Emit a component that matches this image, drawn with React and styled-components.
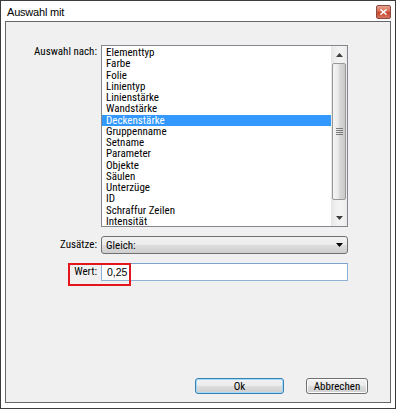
import React from "react";
import styled, { createGlobalStyle } from "styled-components";

const GlobalStyle = createGlobalStyle`
  html, body { margin: 0; padding: 0; background: #ffffff; }
  * { box-sizing: border-box; }
`;

const UI_FONT = `"Roboto Condensed", Roboto, "Liberation Sans", Arial, sans-serif`;

const Window = styled.div`
  width: 396px;
  height: 409px;
  border: 1px solid #3c3c3c;
  background: #ffffff;
  display: flex;
  flex-direction: column;
  padding: 0 4px 5px 4px;
  font-family: ${UI_FONT};
  font-stretch: 75%;
  font-size: 11px;
  color: #000;
`;

const TitleBar = styled.div`
  height: 20px;
  display: flex;
  align-items: center;
  justify-content: space-between;
`;

const Title = styled.span`
  margin-left: 2px;
  margin-top: 1px;
  font-family: "Liberation Sans", Arial, sans-serif;
  font-stretch: normal;
  font-size: 11px;
  letter-spacing: -0.2px;
  color: #000;
`;

const CloseButton = styled.div`
  width: 15px;
  height: 14px;
  margin-top: 2px;
  border: 1px solid #8a4a42;
  border-radius: 2px;
  background: linear-gradient(#e8a593, #d66a52 45%, #c7442c 55%, #d9775f);
  display: flex;
  align-items: center;
  justify-content: center;
`;

const Panel = styled.div`
  flex: 1;
  border: 1px solid #666666;
  background: #f0f0f0;
  display: flex;
  flex-direction: column;
  padding-top: 23px;
`;

const Form = styled.div`
  display: grid;
  grid-template-columns: 91px 247px;
  column-gap: 4px;
  row-gap: 9px;
`;

const Label = styled.div`
  position: relative;
  text-align: right;
  align-self: ${(p) => (p.$top ? "start" : "center")};
  padding-top: ${(p) => (p.$top ? "1px" : "0")};
  line-height: 11.25px;
  white-space: nowrap;
`;

const ListBox = styled.div`
  height: 182px;
  border: 1px solid #828790;
  background: #ffffff;
  display: flex;
  overflow: hidden;
`;

const Items = styled.div`
  flex: 1;
  padding-top: 1px;
  overflow: hidden;
`;

const Item = styled.div`
  height: 11.25px;
  line-height: 11.25px;
  padding-left: 4px;
  white-space: nowrap;
  background: ${(p) => (p.$selected ? "#3399ff" : "transparent")};
  color: ${(p) => (p.$selected ? "#ffffff" : "#000000")};
`;

const ScrollBar = styled.div`
  width: 16px;
  display: flex;
  flex-direction: column;
  background: linear-gradient(90deg, #e6e6e6, #f2f2f2 40%, #f2f2f2 70%, #ebebeb);
`;

const ArrowButton = styled.div`
  height: 17px;
  display: flex;
  align-items: center;
  justify-content: center;
`;

const Thumb = styled.div`
  height: 137px;
  margin: 0 1px;
  border: 1px solid #989898;
  border-radius: 2px;
  background: linear-gradient(90deg, #f4f4f4, #e9e9e9 45%, #d8d8d8 55%, #c9c9c9);
  display: flex;
  align-items: center;
  justify-content: center;
`;

const Track = styled.div`
  flex: 1;
`;

const Select = styled.div`
  height: 18px;
  border: 1px solid #707070;
  border-radius: 3px;
  background: linear-gradient(#f2f2f2, #ebebeb 50%, #dddddd 50%, #cfcfcf);
  display: flex;
  align-items: center;
  justify-content: space-between;
  padding: 0 4px 0 4px;
  line-height: 11px;
`;

const Input = styled.div`
  height: 18px;
  border: 1px solid #8fb2d8;
  border-top-color: #7da2ce;
  background: #ffffff;
  display: flex;
  align-items: center;
  padding-left: 5px;
  font-family: "Liberation Sans", Arial, sans-serif;
  font-stretch: normal;
  font-size: 10.5px;
`;

const Highlight = styled.div`
  position: absolute;
  left: 62px;
  top: -3px;
  width: 63px;
  height: 23px;
  border: 2px solid #e3161e;
  pointer-events: none;
`;

const ButtonRow = styled.div`
  margin-top: auto;
  display: flex;
  justify-content: flex-end;
  gap: 22px;
  padding: 0 22px 8px 0;
`;

const Button = styled.div`
  width: ${(p) => p.$w}px;
  height: 16px;
  border: 1px solid ${(p) => (p.$default ? "#3c7fb1" : "#707070")};
  border-radius: 3px;
  background: linear-gradient(#f2f2f2, #ebebeb 50%, #dddddd 50%, #cfcfcf);
  box-shadow: ${(p) => (p.$default ? "inset 0 0 0 1px #9fdcfb" : "inset 0 0 0 1px #fcfcfc")};
  display: flex;
  align-items: center;
  justify-content: center;
  line-height: 11px;
`;

const items = [
  "Elementtyp",
  "Farbe",
  "Folie",
  "Linientyp",
  "Linienstärke",
  "Wandstärke",
  "Deckenstärke",
  "Gruppenname",
  "Setname",
  "Parameter",
  "Objekte",
  "Säulen",
  "Unterzüge",
  "ID",
  "Schraffur Zeilen",
  "Intensität",
];

const Tri = ({ up, color = "#3e3e3e", w = 7, h = 4 }) => (
  <svg width={w} height={h} viewBox={`0 0 ${w} ${h}`}>
    <polygon
      points={up ? `0,${h} ${w / 2},0 ${w},${h}` : `0,0 ${w},0 ${w / 2},${h}`}
      fill={color}
    />
  </svg>
);

const Grip = () => (
  <svg width="7" height="7" viewBox="0 0 7 7">
    {[0, 2, 4, 6].map((y) => (
      <line key={y} x1="0" y1={y + 0.5} x2="7" y2={y + 0.5} stroke="#7a7a7a" strokeWidth="1" />
    ))}
  </svg>
);

export default function App() {
  return (
    <>
      <GlobalStyle />
      <Window>
        <TitleBar>
          <Title>Auswahl mit</Title>
          <CloseButton>
            <svg width="7" height="6" viewBox="0 0 7 6">
              <path d="M0.5 0.5 L6.5 5.5 M6.5 0.5 L0.5 5.5" stroke="#ffffff" strokeWidth="1.6" />
            </svg>
          </CloseButton>
        </TitleBar>
        <Panel>
          <Form>
            <Label $top>Auswahl nach:</Label>
            <ListBox>
              <Items>
                {items.map((t) => (
                  <Item key={t} $selected={t === "Deckenstärke"}>
                    {t}
                  </Item>
                ))}
              </Items>
              <ScrollBar>
                <ArrowButton>
                  <Tri up />
                </ArrowButton>
                <Thumb>
                  <Grip />
                </Thumb>
                <Track />
                <ArrowButton>
                  <Tri />
                </ArrowButton>
              </ScrollBar>
            </ListBox>

            <Label>Zusätze:</Label>
            <Select>
              <span>Gleich:</span>
              <Tri color="#000000" w={7} h={4} />
            </Select>

            <Label>
              Wert:
              <Highlight />
            </Label>
            <Input>0,25</Input>
          </Form>
          <ButtonRow>
            <Button $default $w={89}>Ok</Button>
            <Button $w={62}>Abbrechen</Button>
          </ButtonRow>
        </Panel>
      </Window>
    </>
  );
}
